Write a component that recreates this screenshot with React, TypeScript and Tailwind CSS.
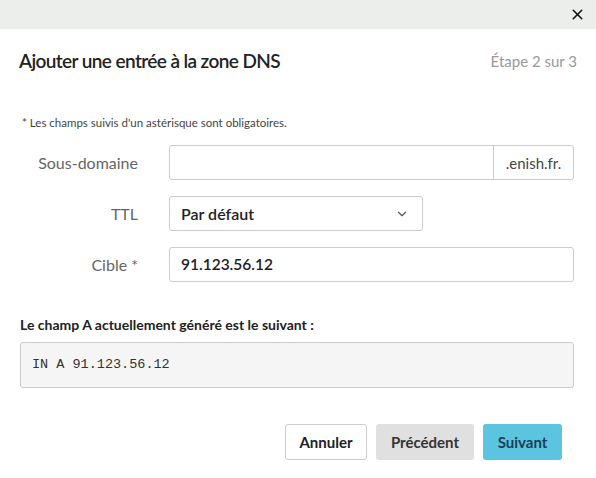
import { X, ChevronDown } from 'lucide-react';

const font = { fontFamily: 'Lato, "Open Sans", sans-serif' };

const App = () => {
  return (
    <div className="w-[596px] h-[478px] bg-white text-[#333]" style={font}>
      <div className="h-[29px] bg-[#eceeec] flex items-center justify-end pr-[10px]">
        <X className="w-[17px] h-[17px] text-[#111]" strokeWidth={2.2} />
      </div>

      <div className="flex items-center justify-between px-[19px] pt-[20px]">
        <h2 className="text-[19px] font-semibold tracking-[-0.6px] text-[#222] leading-[24px]">
          Ajouter une entrée à la zone DNS
        </h2>
        <span className="text-[15px] text-[#999]">Étape 2 sur 3</span>
      </div>

      <p className="mt-[41px] ml-[22px] text-[11.5px] text-[#444]">
        * Les champs suivis d'un astérisque sont obligatoires.
      </p>

      <div className="mt-[14px] flex flex-col gap-[16px] pr-[22px]">
        <div className="flex items-center">
          <label className="w-[138px] text-right text-[16px] text-[#666]">Sous-domaine</label>
          <div className="ml-[31px] flex flex-1 h-[35px] border border-[#ccc] rounded-[3px]">
            <input className="flex-1 px-3 outline-none" />
            <span className="w-[80px] border-l border-[#ccc] flex items-center justify-center text-[15px] text-[#444]">
              .enish.fr.
            </span>
          </div>
        </div>

        <div className="flex items-center">
          <label className="w-[138px] text-right text-[16px] text-[#666]">TTL</label>
          <div className="ml-[31px] w-[254px] h-[35px] border border-[#ccc] rounded-[3px] flex items-center justify-between pl-[11px] pr-[13px]">
            <span className="text-[16px] font-semibold text-[#222]">Par défaut</span>
            <ChevronDown className="w-[14px] h-[14px] text-[#555]" strokeWidth={2} />
          </div>
        </div>

        <div className="flex items-center">
          <label className="w-[138px] text-right text-[16px] text-[#666]">Cible *</label>
          <div className="ml-[31px] flex-1 h-[35px] border border-[#ccc] rounded-[3px] flex items-center pl-[11px]">
            <span className="text-[15.5px] font-semibold text-[#222]">91.123.56.12</span>
          </div>
        </div>
      </div>

      <div className="px-[20px] pr-[22px] mt-[32px]">
        <p className="text-[14px] font-bold text-[#222]">Le champ A actuellement généré est le suivant :</p>
        <div
          className="mt-[7px] h-[46px] bg-[#f5f5f5] border border-[#ccc] rounded-[3px] flex items-center pl-[11px] text-[13.5px] text-[#333]"
          style={{ fontFamily: '"Liberation Mono", "DejaVu Sans Mono", monospace' }}
        >
          IN A 91.123.56.12
        </div>
      </div>

      <div className="flex justify-end gap-[9px] pr-[34px] mt-[36px]">
        <button className="w-[82px] h-[36px] border border-[#ccc] rounded-[3px] bg-white text-[15px] font-bold text-[#222]">
          Annuler
        </button>
        <button className="w-[98px] h-[36px] rounded-[3px] bg-[#e0e0e0] text-[15px] font-bold text-[#333]">
          Précédent
        </button>
        <button className="w-[79px] h-[36px] rounded-[3px] bg-[#5bc5df] text-[15px] font-bold text-[#1c3d5a]">
          Suivant
        </button>
      </div>
    </div>
  );
};

export default App;
